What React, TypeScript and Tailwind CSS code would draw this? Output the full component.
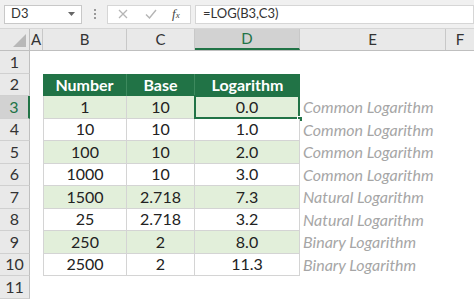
import React from "react";

const font = { fontFamily: "Lato, 'Open Sans', sans-serif" };

type Row = { n: string; b: string; l: string; e: string };
const data: Row[] = [
  { n: "1", b: "10", l: "0.0", e: "Common Logarithm" },
  { n: "10", b: "10", l: "1.0", e: "Common Logarithm" },
  { n: "100", b: "10", l: "2.0", e: "Common Logarithm" },
  { n: "1000", b: "10", l: "3.0", e: "Common Logarithm" },
  { n: "1500", b: "2.718", l: "7.3", e: "Natural Logarithm" },
  { n: "25", b: "2.718", l: "3.2", e: "Natural Logarithm" },
  { n: "250", b: "2", l: "8.0", e: "Binary Logarithm" },
  { n: "2500", b: "2", l: "11.3", e: "Binary Logarithm" },
];

function RowHead({ n, sel }: { n: number; sel?: boolean }) {
  return (
    <div
      className={`w-[30px] shrink-0 flex items-center justify-center border-b border-[#d0d0d0] text-[16px] ${
        sel ? "bg-[#d2d2d2] text-[#217346] border-r-2 border-r-[#217346]" : "bg-[#e9e9e9] text-[#333] border-r border-r-[#bfbfbf]"
      }`}
    >
      {n}
    </div>
  );
}

export default function App() {
  return (
    <div className="w-[474px] h-[300px] overflow-hidden bg-white text-[#222]" style={font}>
      {/* Formula bar */}
      <div className="h-[29px] bg-[#f0f0f0] flex items-center border-b border-[#d6d6d6]">
        <div className="ml-[4px] w-[78px] h-[19px] bg-white border border-[#c8c8c8] flex items-center justify-between px-[6px] text-[13px] text-[#333]">
          <span>D3</span>
          <svg width="7" height="4" viewBox="0 0 7 4"><path d="M0 0h7L3.5 4z" fill="#666" /></svg>
        </div>
        <div className="w-[25px] flex flex-col items-center gap-[2px]">
          <span className="w-[2px] h-[2px] bg-[#999]" />
          <span className="w-[2px] h-[2px] bg-[#999]" />
          <span className="w-[2px] h-[2px] bg-[#999]" />
        </div>
        <div className="w-[84px] h-[19px] bg-white border border-[#d6d6d6] flex items-center">
          <svg className="ml-[10px]" width="10" height="10" viewBox="0 0 10 10">
            <path d="M1 1L9 9M9 1L1 9" stroke="#b5b5b5" strokeWidth="1.3" />
          </svg>
          <svg className="ml-[17px]" width="12" height="10" viewBox="0 0 12 10">
            <path d="M1 5.5L4.5 9L11 1" stroke="#b5b5b5" strokeWidth="1.4" fill="none" />
          </svg>
          <span className="ml-[15px] text-[13px] italic text-[#444]" style={{ fontFamily: "'Liberation Serif', serif" }}>
            f<span className="text-[9px]">x</span>
          </span>
        </div>
        <div className="ml-[4px] flex-1 h-[19px] bg-white border border-[#d6d6d6] flex items-center pl-[7px] text-[13px] text-[#333]">
          =LOG(B3,C3)
        </div>
      </div>

      {/* Column headers */}
      <div className="h-[22px] flex bg-[#e9e9e9] border-b border-[#bfbfbf] text-[15px] text-[#333]">
        <div className="w-[30px] shrink-0 border-r border-[#bfbfbf] relative">
          <svg className="absolute right-[3px] bottom-[3px]" width="13" height="13" viewBox="0 0 13 13">
            <path d="M13 0V13H0z" fill="#b8b8b8" />
          </svg>
        </div>
        <div className="w-[13px] shrink-0 border-r border-[#c8c8c8] flex items-center justify-center">A</div>
        <div className="w-[84px] shrink-0 border-r border-[#c8c8c8] flex items-center justify-center">B</div>
        <div className="w-[68px] shrink-0 border-r border-[#c8c8c8] flex items-center justify-center">C</div>
        <div className="w-[105px] shrink-0 border-r border-[#c8c8c8] bg-[#d2d2d2] border-b-2 border-b-[#217346] flex items-center justify-center text-[#217346]">D</div>
        <div className="w-[146px] shrink-0 border-r border-[#c8c8c8] flex items-center justify-center">E</div>
        <div className="flex-1 flex items-center justify-center">F</div>
      </div>

      {/* Row 1 */}
      <div className="h-[22.5px] flex">
        <RowHead n={1} />
        <div className="flex-1" />
      </div>

      {/* Row 2 header */}
      <div className="h-[22.5px] flex">
        <RowHead n={2} />
        <div className="w-[13px] shrink-0" />
        <div className="w-[84px] shrink-0 bg-[#217346] text-white font-bold text-[16px] flex items-center justify-center border-r border-[#3d8a5e]">Number</div>
        <div className="w-[68px] shrink-0 bg-[#217346] text-white font-bold text-[16px] flex items-center justify-center border-r border-[#3d8a5e]">Base</div>
        <div className="w-[105px] shrink-0 bg-[#217346] text-white font-bold text-[16px] flex items-center justify-center">Logarithm</div>
        <div className="flex-1" />
      </div>

      {data.map((r, i) => {
        const rowNum = i + 3;
        const green = i % 2 === 0;
        const bg = green ? "bg-[#e2efda]" : "bg-white";
        const sel = i === 0;
        return (
          <div key={i} className="h-[22.5px] flex">
            <RowHead n={rowNum} sel={sel} />
            <div className="w-[13px] shrink-0" />
            <div className={`w-[84px] shrink-0 ${bg} border-l border-b border-r border-[#d4d4d4] flex items-center justify-center text-[16px]`}>{r.n}</div>
            <div className={`w-[68px] shrink-0 ${bg} border-b border-r border-[#d4d4d4] flex items-center justify-center text-[16px]`}>{r.b}</div>
            <div className={`w-[105px] shrink-0 ${bg} border-b border-r border-[#d4d4d4] flex items-center justify-center text-[16px] relative`}>
              {r.l}
              {sel && (
                <>
                  <div className="absolute -left-[1px] -top-[1px] -right-[1px] -bottom-[1px] border-2 border-[#217346]" />
                  <div className="absolute -right-[4px] -bottom-[4px] w-[6px] h-[6px] bg-[#217346] border border-white" />
                </>
              )}
            </div>
            <div className="flex-1 flex items-center pl-[3px] italic text-[16px] text-[#a6a6a6] whitespace-nowrap">{r.e}</div>
          </div>
        );
      })}

      {/* Row 11 */}
      <div className="h-[22.5px] flex">
        <RowHead n={11} />
        <div className="flex-1" />
      </div>
    </div>
  );
}
